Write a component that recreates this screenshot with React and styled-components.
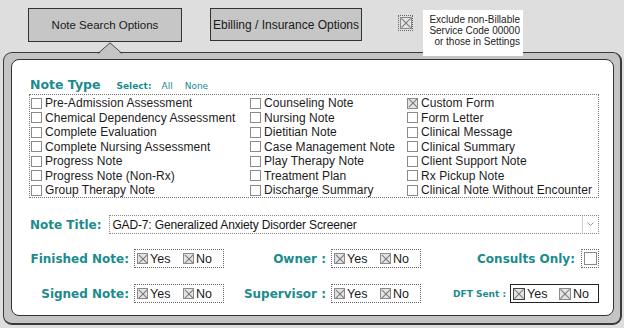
import React from "react";
import styled, { createGlobalStyle, css } from "styled-components";

const TEAL = "#1b8b8d";

const GlobalStyle = createGlobalStyle`
  html, body {
    margin: 0;
    padding: 0;
    background: #dedede;
    font-family: "Liberation Sans", Arial, sans-serif;
  }
  #root {
    width: 624px;
    height: 328px;
    overflow: hidden;
  }
`;

const TYPES = [
  ["Pre-Admission Assessment", false],
  ["Chemical Dependency Assessment", false],
  ["Complete Evaluation", false],
  ["Complete Nursing Assessment", false],
  ["Progress Note", false],
  ["Progress Note (Non-Rx)", false],
  ["Group Therapy Note", false],
  ["Counseling Note", false],
  ["Nursing Note", false],
  ["Dietitian Note", false],
  ["Case Management Note", false],
  ["Play Therapy Note", false],
  ["Treatment Plan", false],
  ["Discharge Summary", false],
  ["Custom Form", true],
  ["Form Letter", false],
  ["Clinical Message", false],
  ["Clinical Summary", false],
  ["Client Support Note", false],
  ["Rx Pickup Note", false],
  ["Clinical Note Without Encounter", false],
];

const Page = styled.div`
  width: 624px;
  height: 328px;
  display: flex;
  flex-direction: column;
`;

const TopBar = styled.div`
  height: 52px;
  display: flex;
  align-items: flex-start;
  padding: 8px 0 0 28px;
  box-sizing: border-box;
  position: relative;
  z-index: 2;
`;

const TabButton = styled.div`
  width: ${(p) => p.$w}px;
  height: ${(p) => p.$h}px;
  margin-right: ${(p) => p.$mr || 0}px;
  box-sizing: border-box;
  border: 1px solid #333;
  background: #c6c6c6;
  display: flex;
  align-items: center;
  justify-content: center;
  font-size: ${(p) => p.$fs}px;
  color: #1a1a1a;
  white-space: nowrap;
`;

const DottedWrap = styled.div`
  box-sizing: border-box;
  border: 1px dotted #666;
  display: flex;
  align-items: center;
  justify-content: center;
  width: ${(p) => p.$w}px;
  height: ${(p) => p.$h}px;
  margin-top: ${(p) => p.$mt || 0}px;
  margin-left: ${(p) => p.$ml || 0}px;
`;

const ExcludeText = styled.div`
  margin-left: 10px;
  margin-top: 2px;
  width: 100px;
  height: 46px;
  box-sizing: border-box;
  background: #fff;
  padding: 4px 3px 0 0;
  text-align: right;
  font-size: 10px;
  line-height: 11px;
  color: #222;
`;

const Box = styled.span`
  display: inline-block;
  position: relative;
  flex: none;
  width: ${(p) => p.$size || 11}px;
  height: ${(p) => p.$size || 11}px;
  box-sizing: border-box;
  border: 1px solid ${(p) => (p.$dark ? "#444" : "#8a8a8a")};
  background: ${(p) => (p.$checked ? "#e4e4e4" : "#fff")};
  ${(p) =>
    p.$checked &&
    css`
      &::before,
      &::after {
        content: "";
        position: absolute;
        left: 50%;
        top: 50%;
        width: 130%;
        height: 1px;
        background: #7a7a7a;
      }
      &::before {
        transform: translate(-50%, -50%) rotate(45deg);
      }
      &::after {
        transform: translate(-50%, -50%) rotate(-45deg);
      }
    `}
  overflow: hidden;
`;

const Frame = styled.div`
  position: relative;
  margin: 0 2px 0 3px;
  height: 273px;
  box-sizing: border-box;
  border: 1px solid #3a3a3a;
  border-right-width: 2px;
  border-bottom-width: 2px;
  border-radius: 9px;
  background: #c4c4c4;
  padding: 6px 6px 7px 7px;
`;

const Pointer = styled.svg`
  position: absolute;
  left: 93px;
  top: -11px;
`;

const Inner = styled.div`
  height: 100%;
  box-sizing: border-box;
  background: #fff;
  border: 1px solid #333;
  border-radius: 8px;
  padding: 17px 14px 0 17px;
  display: flex;
  flex-direction: column;
`;

const HeadRow = styled.div`
  display: flex;
  align-items: baseline;
  height: 17px;
  padding-left: 1px;
  font-family: "DejaVu Sans", Verdana, sans-serif;
  color: ${TEAL};
`;

const Heading = styled.span`
  font-size: 12.5px;
  font-weight: bold;
`;

const SmallLabel = styled.span`
  font-size: 9px;
  font-weight: ${(p) => (p.$bold ? "bold" : "normal")};
  margin-left: ${(p) => p.$ml}px;
`;

const TypeGrid = styled.div`
  width: 570px;
  height: 104px;
  box-sizing: border-box;
  border: 1px dotted #777;
  padding: 1px 0 0 1px;
  display: grid;
  grid-template-columns: 219px 157px 1fr;
  grid-template-rows: repeat(7, 14.5px);
  grid-auto-flow: column;
`;

const TypeItem = styled.label`
  display: flex;
  align-items: center;
  font-size: 12px;
  letter-spacing: 0.05px;
  color: #1c1c1c;
  white-space: nowrap;
  ${Box} {
    margin-right: 3px;
  }
`;

const TitleRow = styled.div`
  display: flex;
  align-items: center;
  margin-top: 17px;
  padding-left: 1px;
`;

const Label = styled.span`
  font-family: "DejaVu Sans", Verdana, sans-serif;
  font-weight: bold;
  font-size: ${(p) => p.$fs || 12}px;
  color: ${TEAL};
  white-space: nowrap;
  justify-self: end;
  margin-right: ${(p) => p.$mr || 0}px;
`;

const Select = styled.div`
  margin-left: 8px;
  flex: 1;
  height: 19px;
  box-sizing: border-box;
  border: 1px dotted #888;
  display: flex;
  align-items: center;
  font-size: 12px;
  letter-spacing: -0.15px;
  color: #151515;
  padding-left: 2px;
`;

const SelectText = styled.span`
  flex: 1;
`;

const Arrow = styled.span`
  width: 15px;
  height: 100%;
  border-left: 1px solid #d0d0d0;
  display: flex;
  align-items: center;
  justify-content: center;
`;

const OptionGrid = styled.div`
  margin-top: 15px;
  display: grid;
  grid-template-columns: 99px 90px 97px 90px 1fr;
  grid-template-rows: 19px 19px;
  column-gap: 5px;
  row-gap: 16px;
  align-items: center;
  padding-left: 1px;
`;

const EndCell = styled.div`
  display: flex;
  align-items: center;
  justify-content: flex-end;
`;

const YesNoBox = styled.div`
  width: ${(p) => p.$w || 90}px;
  height: 19px;
  box-sizing: border-box;
  border: 1px ${(p) => (p.$solid ? "solid #222" : "dotted #666")};
  display: flex;
  align-items: center;
  padding-left: 2px;
  font-size: 12.5px;
  color: #1a1a1a;
`;

const YesNoItem = styled.span`
  display: flex;
  align-items: center;
  width: ${(p) => p.$w}px;
  ${Box} {
    margin-right: 2px;
  }
`;

function YesNo({ solid, w }) {
  return (
    <YesNoBox $solid={solid} $w={w}>
      <YesNoItem $w={46}>
        <Box $checked $dark={solid} $size={solid ? 12 : 11} />
        Yes
      </YesNoItem>
      <YesNoItem $w={30}>
        <Box $checked $size={solid ? 12 : 11} />
        No
      </YesNoItem>
    </YesNoBox>
  );
}

export default function App() {
  return (
    <>
      <GlobalStyle />
      <Page>
        <TopBar>
          <TabButton $w={154} $h={34} $fs={11.5} $mr={28}>
            Note Search Options
          </TabButton>
          <TabButton $w={152} $h={33} $fs={12}>
            Ebilling / Insurance Options
          </TabButton>
          <DottedWrap $w={15} $h={16} $mt={7} $ml={36}>
            <Box $checked $size={12} />
          </DottedWrap>
          <ExcludeText>
            Exclude non-Billable
            <br />
            Service Code 00000
            <br />
            or those in Settings
          </ExcludeText>
        </TopBar>
        <Frame>
          <Pointer width="26" height="13" viewBox="0 0 26 13">
            <polygon points="1,12.5 13,1 25,12.5" fill="#c4c4c4" />
            <polyline
              points="1,11.5 13,0.8 25,11.5"
              fill="none"
              stroke="#444"
              strokeWidth="1"
            />
          </Pointer>
          <Inner>
            <HeadRow>
              <Heading>Note Type</Heading>
              <SmallLabel $bold $ml={16}>
                Select:
              </SmallLabel>
              <SmallLabel $ml={10}>All</SmallLabel>
              <SmallLabel $ml={12}>None</SmallLabel>
            </HeadRow>
            <TypeGrid>
              {TYPES.map(([name, checked]) => (
                <TypeItem key={name}>
                  <Box $checked={checked} />
                  {name}
                </TypeItem>
              ))}
            </TypeGrid>
            <TitleRow>
              <Label>Note Title:</Label>
              <Select>
                <SelectText>GAD-7: Generalized Anxiety Disorder Screener</SelectText>
                <Arrow>
                  <svg width="7" height="5" viewBox="0 0 7 5">
                    <polyline points="0.5,0.5 3.5,3.5 6.5,0.5" fill="none" stroke="#999" />
                  </svg>
                </Arrow>
              </Select>
            </TitleRow>
            <OptionGrid>
              <Label>Finished Note:</Label>
              <YesNo />
              <Label>Owner :</Label>
              <YesNo />
              <EndCell>
                <Label $mr={6}>Consults Only:</Label>
                <DottedWrap $w={18} $h={19}>
                  <Box $size={13} />
                </DottedWrap>
              </EndCell>
              <Label>Signed Note:</Label>
              <YesNo />
              <Label>Supervisor :</Label>
              <YesNo />
              <EndCell>
                <Label $fs={9} $mr={4}>
                  DFT Sent :
                </Label>
                <YesNo solid w={89} />
              </EndCell>
            </OptionGrid>
          </Inner>
        </Frame>
      </Page>
    </>
  );
}
